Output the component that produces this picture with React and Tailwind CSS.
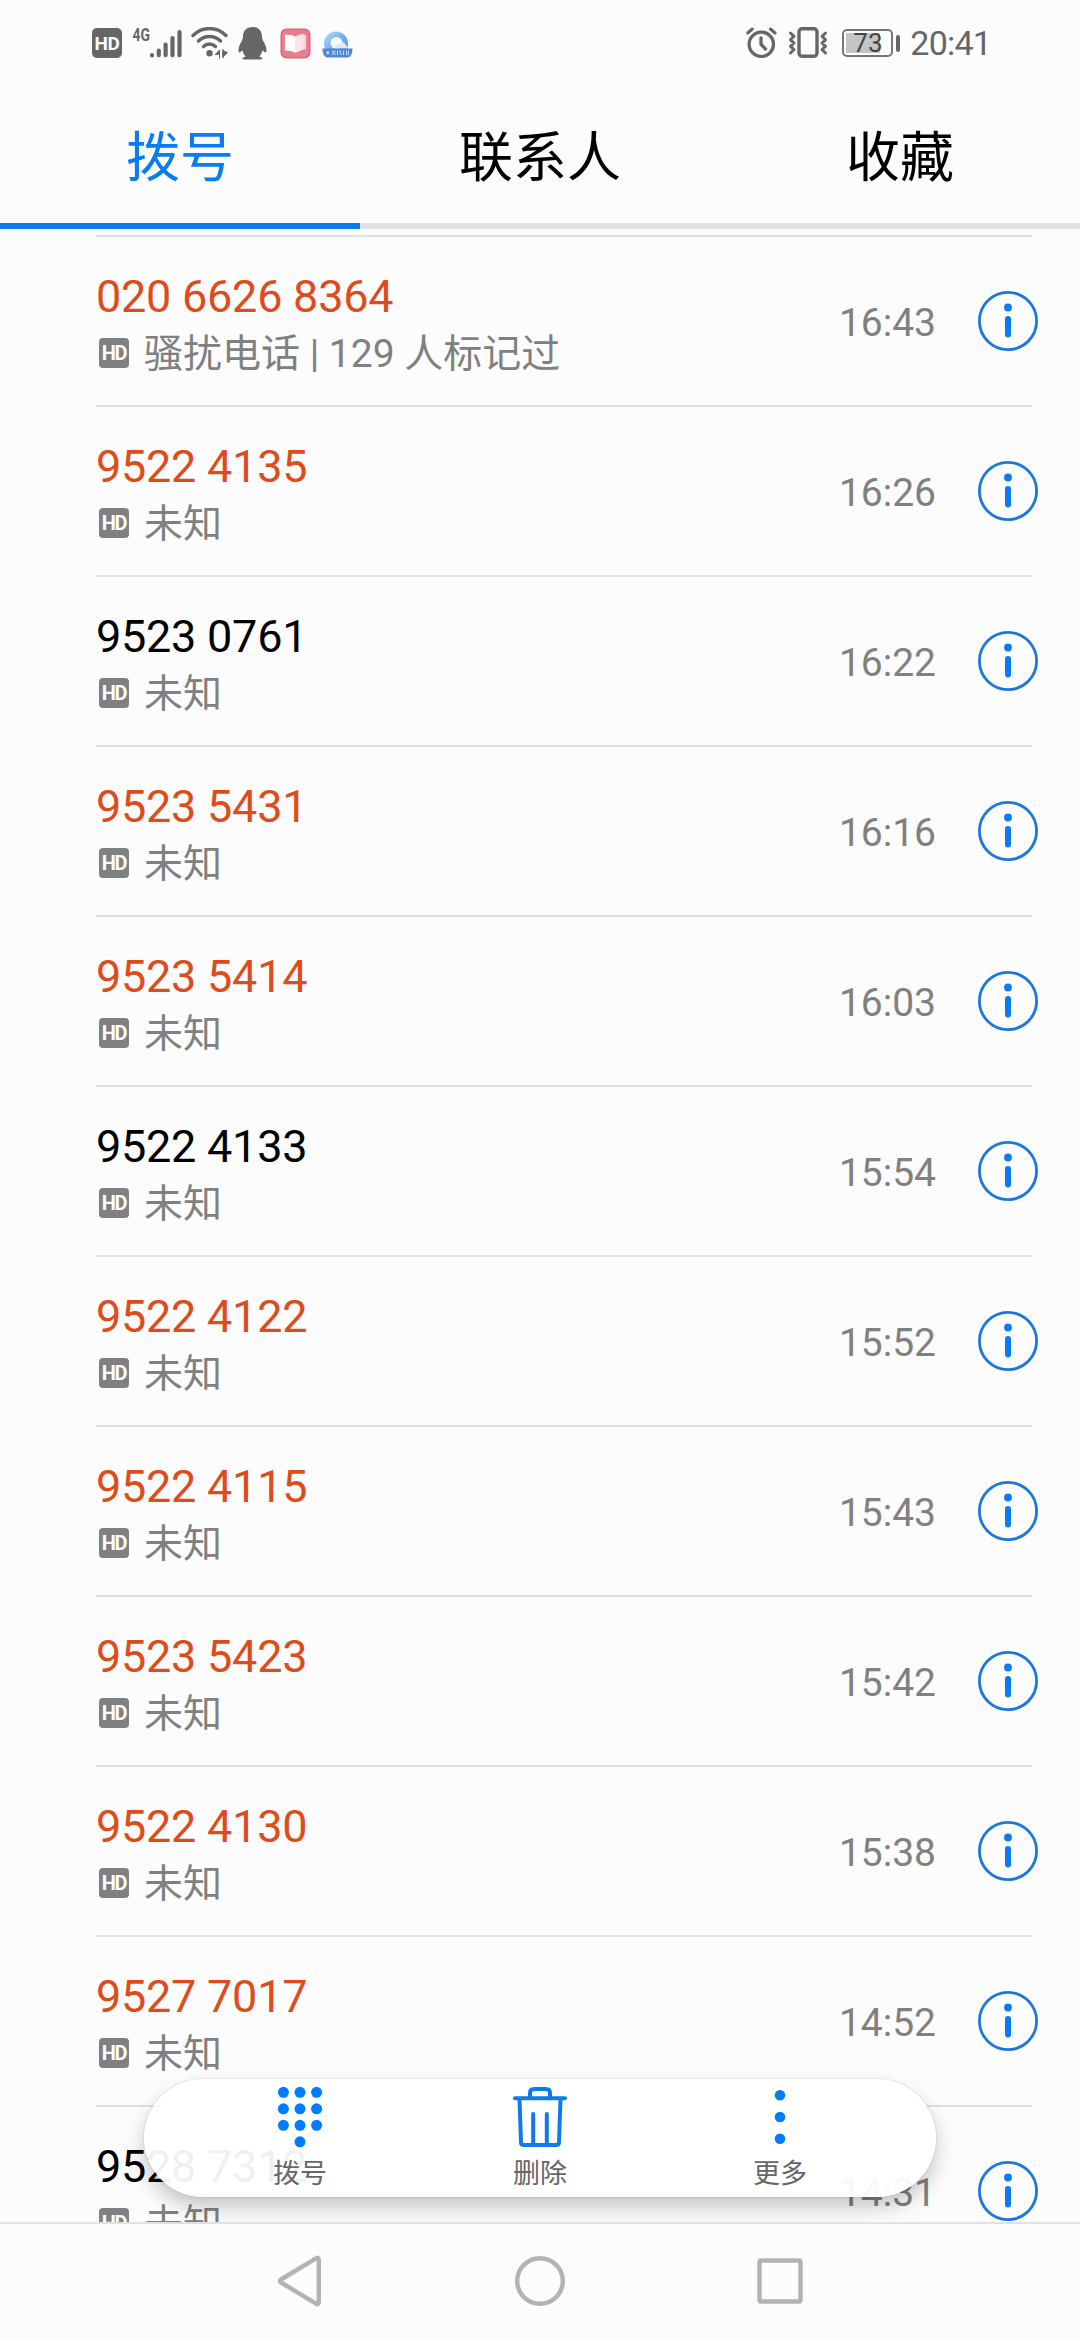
import React from "react";

const calls = [
  { number: "020 6626 8364", note: "骚扰电话 | 129 人标记过", time: "16:43", missed: true },
  { number: "9522 4135", note: "未知", time: "16:26", missed: true },
  { number: "9523 0761", note: "未知", time: "16:22", missed: false },
  { number: "9523 5431", note: "未知", time: "16:16", missed: true },
  { number: "9523 5414", note: "未知", time: "16:03", missed: true },
  { number: "9522 4133", note: "未知", time: "15:54", missed: false },
  { number: "9522 4122", note: "未知", time: "15:52", missed: true },
  { number: "9522 4115", note: "未知", time: "15:43", missed: true },
  { number: "9523 5423", note: "未知", time: "15:42", missed: true },
  { number: "9522 4130", note: "未知", time: "15:38", missed: true },
  { number: "9527 7017", note: "未知", time: "14:52", missed: true },
  { number: "9528 7312", note: "未知", time: "14:31", missed: false },
];

const tabs = ["拨号", "联系人", "收藏"];

const SignalIcon = () => (
  <svg width="50" height="32" viewBox="0 0 50 32" className="ml-[10px]" fill="none" stroke="#666" strokeWidth="4.2" strokeLinecap="round">
    <text x="0.5" y="14" fontSize="19" fontWeight="700" fontFamily="Roboto" fill="#666" stroke="none" textLength="17.5" lengthAdjust="spacingAndGlyphs">
      4G
    </text>
    <path d="M20 28.200v.2M26.800 23.500v4.700M33.600 17.500v10.700M40.500 11v17.200M47.500 5v23.200" />
  </svg>
);

const WifiIcon = () => (
  <svg width="38" height="32" viewBox="0 0 38 32" className="ml-[9px]" fill="none" stroke="#666" strokeWidth="3.4" strokeLinecap="round">
    <path d="M2 8.500C11.500-.8 25.500-.8 35 8.500" />
    <path d="M7.500 14c6.500-6 15.500-6 22 0" />
    <path d="M12.500 19.500c3.500-3.300 8.500-3.300 12 0" />
    <circle cx="18.500" cy="26.200" r="3.200" fill="#666" stroke="none" />
    <path d="M24.500 27.300l4-4.300v8.500v-4zM32 22.500v8.500M32 23.500l4.500 2.200-4.500 4z" fill="#666" strokeWidth="1" />
  </svg>
);

const PenguinIcon = () => (
  <svg width="30" height="34" viewBox="0 0 30 34" className="ml-[9px]" fill="#666">
    <path d="M14.500 1C8.500 1 5 5 5 10.500c0 1.500-.6 2.300-.8 3.700C2.500 17 .5 20.500.5 24c0 2.600 1 3.200 2.300 1.800l1.600-1.600c.5 2.600 1.700 4.600 3.400 6.200-2.200.6-3.300 1.200-3.300 2.100 0 1 2.500 1.100 5.500 1h9c3 .1 5.500 0 5.500-1 0-.9-1.100-1.500-3.300-2.100 1.700-1.600 2.900-3.600 3.400-6.200l1.600 1.600c1.300 1.400 2.300.8 2.300-1.800 0-3.500-2-7-3.700-9.800-.2-1.400-.8-2.200-.8-3.700C24 5 20.500 1 14.500 1z" />
  </svg>
);

const BookIcon = () => (
  <svg width="31" height="31" viewBox="0 0 31 31" className="ml-[12px]">
    <rect x=".5" y=".5" width="30" height="30" rx="6" fill="#e0637a" />
    <rect x="2" y="2" width="27" height="27" rx="5" fill="#e87f91" />
    <path d="M15 8.500c2-1.500 6-2 11-1.500v14.500c-5-.5-9 .5-11 2z" fill="#f7d5da" />
    <path d="M5 7c5-.6 8 .4 10 2v15.800c-2-1.600-5-2.300-10-2.300z" fill="#fff" />
    <path d="M15 9l8.500-3.500v16L15 25z" fill="#fbe4e8" />
  </svg>
);

const CloudIcon = () => (
  <svg width="31" height="31" viewBox="0 0 31 31" className="ml-[11px]">
    <defs>
      <linearGradient id="ring" x1="0" y1="0" x2="1" y2="1">
        <stop offset="0" stopColor="#b5daf8" />
        <stop offset="0.6" stopColor="#6aa8ee" />
        <stop offset="1" stopColor="#4a86dc" />
      </linearGradient>
    </defs>
    <circle cx="14" cy="15.500" r="12" fill="url(#ring)" />
    <circle cx="14.500" cy="15" r="6" fill="#f6fafe" />
    <path d="M14 17l7-3c2 1 4 4 4.500 6.500H12z" fill="#dbe9fa" />
    <path d="M.5 20.500h30c0 4.500-1.500 9-5 9h-20C2 29.500.5 25 .5 20.500z" fill="#4f86d6" />
    <circle cx="5.800" cy="24.800" r="1.500" fill="#cfe2fa" />
    <path d="M10 22.500l3.500 4.500m0-4.500L10 27M15.500 22.500V27m2-4.500l2 4.500m2-4.500V27m3-4.500V27m2-4.500V27" stroke="#c5d9f5" strokeWidth="1.100" />
  </svg>
);

const AlarmIcon = () => (
  <svg width="31" height="32" viewBox="0 0 31 32" fill="none" stroke="#666" strokeLinecap="round" strokeLinejoin="round">
    <circle cx="15.300" cy="17.300" r="12.200" strokeWidth="3.200" />
    <path d="M15 11v6.300l4.500 4.700" strokeWidth="3.300" />
    <path d="M1.700 6l4.600-4M29 6l-4.600-4" strokeWidth="3" />
  </svg>
);

const VibrateIcon = () => (
  <svg width="40" height="32" viewBox="0 0 40 32" className="ml-[11px]" fill="none" stroke="#666" strokeLinecap="round" strokeLinejoin="round">
    <rect x="11" y="1.700" width="18" height="27.600" rx="3" strokeWidth="3.400" />
    <path d="M2.500 6l3.500 3.300-3.500 3.500L6 16l-3.500 3.300L6 22.500 2.500 26M37.500 6L34 9.300l3.500 3.500L34 16l3.500 3.300-3.500 3.200 3.500 3.500" strokeWidth="3" />
  </svg>
);

const StatusBar = () => (
  <div className="flex h-[84px] items-center pl-[92px] pr-[89px] pt-[2px]">
    <span className="flex h-[30px] w-[30px] items-center justify-center rounded-[5px] bg-[#666] text-[19px] font-bold leading-none tracking-[-0.5px] text-[#fcfcfc]">
      HD
    </span>
    <SignalIcon />
    <WifiIcon />
    <PenguinIcon />
    <BookIcon />
    <CloudIcon />
    <div className="ml-auto flex items-center">
      <AlarmIcon />
      <VibrateIcon />
      <div className="ml-[14px] flex h-[28px] w-[51px] rounded-[5px] border-2 border-[#777] p-[2px]">
        <span className="flex h-full w-[34px] items-center bg-[#c4c4c4] pl-[7px] text-[26px] leading-none text-[#444]">
          73
        </span>
      </div>
      <span className="ml-[3px] h-[17px] w-[4px] rounded-sm bg-[#666]" />
      <span className="ml-[10px] text-[34px] leading-[40px] tracking-[-0.8px] text-[#666]">20:41</span>
    </div>
  </div>
);

const InfoIcon = () => (
  <svg width="60" height="60" viewBox="0 0 60 60" fill="none">
    <circle cx="30" cy="30" r="28.600" stroke="#1a78dc" strokeWidth="2.800" />
    <circle cx="30" cy="16.500" r="3.900" fill="#0a7cf0" />
    <rect x="27" y="25" width="6" height="21.500" rx="3" fill="#0a7cf0" />
  </svg>
);

const CallRow = ({ number, note, time, missed }) => (
  <li className="ml-[96px] mr-12 flex h-[170px] shrink-0 border-b-2 border-[#e1e1e1]">
    <div className="flex-1 pt-[34px]">
      <p className={`text-[45px] leading-[52px] tracking-[-0.25px] ${missed ? "text-[#de4c1c]" : "text-black"}`}>
        {number}
      </p>
      <div className="mt-1 flex h-[54px] items-center">
        <span className="mb-[2px] ml-[3px] flex h-[30px] w-[30px] items-center justify-center rounded-[4px] bg-[#808080] text-[20px] font-bold leading-none tracking-[-1.2px] text-[#fcfcfc]">
          HD
        </span>
        <span className="ml-[15px] text-[39px] leading-[54px] text-[#808080]">{note}</span>
      </div>
    </div>
    <span className="pt-[63px] text-[39px] leading-[46px] text-[#808080]">{time}</span>
    <div className="-mr-[6px] ml-[42px] pt-[54px]">
      <InfoIcon />
    </div>
  </li>
);

const DialpadIcon = () => (
  <svg width="60" height="66" viewBox="0 0 60 66" fill="#007dff">
    {[8.3, 24.8, 41.3].map((y) =>
      [13.4, 30, 46.6].map((x) => <circle key={`${x}-${y}`} cx={x} cy={y} r="5.500" />)
    )}
    <circle cx="30" cy="57.800" r="5.500" />
  </svg>
);

const TrashIcon = () => (
  <svg width="60" height="66" viewBox="0 0 60 66" fill="none" stroke="#0e7bea" strokeWidth="4" strokeLinecap="round" strokeLinejoin="round">
    <path d="M5 14.200h50" />
    <path d="M20 13v-4q0-4 4-4h12q4 0 4 4v4" />
    <path d="M9.500 15l1.500 43.500q.2 2.500 3 2.500h32q2.800 0 3-2.500L50.500 15" />
    <path d="M23.200 30v30M36.800 30v30" />
  </svg>
);

const MoreIcon = () => (
  <svg width="60" height="66" viewBox="0 0 60 66" fill="#007dff">
    <circle cx="30" cy="11.200" r="5.300" />
    <circle cx="30" cy="33" r="5.300" />
    <circle cx="30" cy="54.700" r="5.300" />
  </svg>
);

const Action = ({ icon, label }) => (
  <button className="flex w-[240px] flex-col items-center pt-[5px]">
    <span className="h-[72px]">{icon}</span>
    <span className="text-[27px] leading-[36px] text-[#666]">{label}</span>
  </button>
);

const NavBar = () => (
  <nav className="flex h-[118px] items-center justify-center border-t-2 border-[#e1e1e1]">
    {[
      <path key="back" d="M48.800 7.500v43q-.4 2.500-2.400 1.300L11 30.500q-2-1.500 0-3L46.400 6.200q2-1.200 2.400 1.300z" />,
      <circle key="home" cx="30" cy="29" r="22.800" />,
      <rect key="recent" x="9.500" y="8.500" width="41" height="41" rx="1.500" />,
    ].map((shape) => (
      <div key={shape.key} className="flex w-[240px] justify-center">
        <svg width="60" height="60" viewBox="0 0 60 60" fill="none" stroke="#b3b3b3" strokeWidth="4.400" strokeLinejoin="round">
          {shape}
        </svg>
      </div>
    ))}
  </nav>
);

const App = () => {
  return (
    <div className="flex h-[2340px] w-[1080px] flex-col overflow-hidden bg-[#fcfcfc] font-[Roboto,'Noto_Sans_CJK_SC',sans-serif]">
      <StatusBar />

      {/* Tabs */}
      <div className="flex h-[145px]">
        {tabs.map((tab, i) => (
          <div
            key={tab}
            className={`flex flex-1 justify-center border-b-6 pt-[35px] text-[54px] leading-[80px] ${
              i === 0 ? "border-[#087cf0] text-[#087cf0]" : "border-[#e1e1e1] text-black"
            }`}
          >
            {tab}
          </div>
        ))}
      </div>

      {/* Call log */}
      <div className="relative h-[1993px] overflow-hidden">
        <div className="ml-[96px] mr-12 mt-[6px] h-[2px] bg-[#e1e1e1]" />
        <ul className="flex flex-col">
          {calls.map((call) => (
            <CallRow key={call.number} {...call} />
          ))}
        </ul>

        {/* Floating actions */}
        <div className="absolute left-[144px] top-[1850px] flex h-[118px] w-[792px] justify-center rounded-full bg-white/94 shadow-[0_0_2px_rgba(0,0,0,0.2),0_10px_20px_rgba(0,0,0,0.22)]">
          <Action icon={<DialpadIcon />} label="拨号" />
          <Action icon={<TrashIcon />} label="删除" />
          <Action icon={<MoreIcon />} label="更多" />
        </div>
      </div>

      <NavBar />
    </div>
  );
};

export default App;
